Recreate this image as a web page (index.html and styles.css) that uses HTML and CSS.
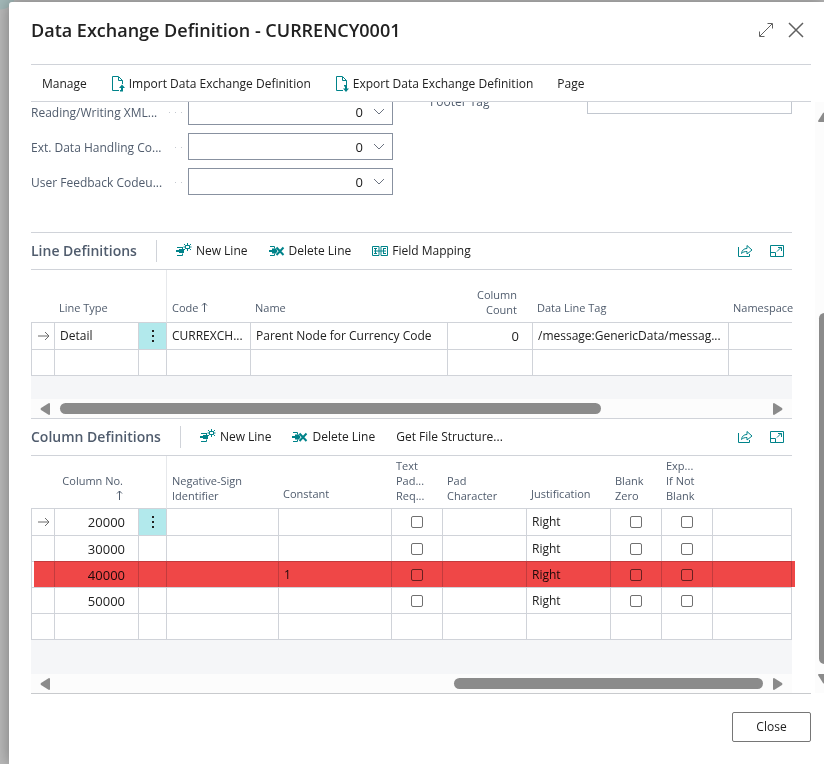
FILE: index.html
```html
<!DOCTYPE html>
<html lang="en">
<head>
  <meta charset="UTF-8">
  <meta name="viewport" content="width=device-width, initial-scale=1.0">
  <title>Data Exchange Definition - CURRENCY0001</title>
  <link rel="stylesheet" href="styles.css">
</head>
<body>
  <!-- Shared icons -->
  <svg class="sprite" aria-hidden="true">
    <symbol id="i-new" viewBox="0 0 16 16">
      <path d="M1 4.500h5M1 12.500h5.500M6.500 12.500v-2M6.500 4v2" fill="none" stroke="currentColor"/>
      <path d="M3 6h5v4H3V9H0V7h3z" fill="currentColor"/>
      <path d="M9.500 2.500h4v3h-4zM8 1l1.500 1.500M15 1l-1.500 1.500M8 7l1.500-1.500M15 7l-1.500-1.500M11.500 0v2M11.500 6v2M7.500 4h2M13.500 4h2" fill="none" stroke="currentColor"/>
    </symbol>
    <symbol id="i-delete" viewBox="0 0 16 16">
      <path d="M1 3.500h4.500v2M1 12.500h4.500v-2" fill="none" stroke="currentColor"/>
      <path d="M3 5.500h4l1.500 2.500L7 10.500H3V9H0V7h3z" fill="currentColor"/>
      <path d="M7.500 4.500l7 7.500M14.500 4.500l-7 7.500" fill="none" stroke="currentColor" stroke-width="2"/>
    </symbol>
    <symbol id="i-map" viewBox="0 0 16 16">
      <path d="M.5 3.500v9h6.500v-9zM9 3.500v9h6.500v-9z" fill="none" stroke="currentColor"/>
      <path d="M2 5.500h3M2 8h3M2 10.500h3M11 5.500h3M11 8h3M11 10.500h3M3.500 5v6M11.500 5v6M5 8h6" fill="none" stroke="currentColor"/>
    </symbol>
    <symbol id="i-share" viewBox="0 0 16 16">
      <path d="M1.500 4v9.500h11V11" fill="none" stroke="currentColor"/>
      <path d="M4.500 10.500c.5-3.500 2.500-5 5.500-5v-3L15 7l-5 4V8.500c-2.500 0-4 .5-5.500 2z" fill="none" stroke="currentColor"/>
    </symbol>
    <symbol id="i-expand" viewBox="0 0 16 16">
      <path d="M1.500 2.500h13v11h-13zM1.500 9.500h5v4M8 8.500l4.500-4.500M9 4.500h3.500V8" fill="none" stroke="currentColor"/>
    </symbol>
    <symbol id="i-row" viewBox="0 0 14 12">
      <path d="M1 6h11M8 2l4 4-4 4" fill="none" stroke="currentColor"/>
    </symbol>
    <symbol id="i-chevron" viewBox="0 0 12 8">
      <path d="M1 1l5 5 5-5" fill="none" stroke="currentColor"/>
    </symbol>
    <symbol id="i-dots" viewBox="0 0 4 14">
      <path d="M1 1h2v2H1zM1 6h2v2H1zM1 11h2v2H1z" fill="currentColor"/>
    </symbol>
    <symbol id="i-left" viewBox="0 0 10 12">
      <path d="M9 0q1 0 1 1v10q0 1-1 1L1 7Q0 6 1 5z" fill="currentColor"/>
    </symbol>
    <symbol id="i-right" viewBox="0 0 10 12">
      <path d="M1 0Q0 0 0 1v10q0 1 1 1l8-5q1-1 0-2z" fill="currentColor"/>
    </symbol>
    <symbol id="i-up" viewBox="0 0 12 10">
      <path d="M0 9q0 1 1 1h10q1 0 1-1L7 1Q6 0 5 1z" fill="currentColor"/>
    </symbol>
    <symbol id="i-down" viewBox="0 0 12 10">
      <path d="M0 1q0-1 1-1h10q1 0 1 1L7 9q-1 1-2 0z" fill="currentColor"/>
    </symbol>
  </svg>

  <main class="dialog">
    <header class="dialog-header">
      <h1>Data Exchange Definition - CURRENCY0001</h1>
      <button class="icon-btn" aria-label="Enlarge">
        <svg width="16" height="16" viewBox="0 0 16 16"><path d="M2 14L14 2M9.500 1.500h5v5M1.500 9.500v5h5" fill="none" stroke="currentColor"/></svg>
      </button>
      <button class="icon-btn" aria-label="Close dialog">
        <svg width="16" height="16" viewBox="0 0 16 16"><path d="M1 1l14 14M15 1L1 15" fill="none" stroke="currentColor" stroke-width="1.500"/></svg>
      </button>
    </header>

    <nav class="action-bar">
      <button>Manage</button>
      <button>
        <svg width="14" height="16" viewBox="0 0 14 16"><path d="M8 14.500H1.500V.5h6l4 4V8M7.500 1v3.500h4" fill="none" stroke="currentColor"/><path d="M11 8.500l3 3.500h-2v3.500H9V14h1v-2H8z" fill="currentColor"/></svg>
        Import Data Exchange Definition
      </button>
      <button>
        <svg width="14" height="16" viewBox="0 0 14 16"><path d="M8 14.500H1.500V.5h6l4 4V9M7.500 1v3.500h4" fill="none" stroke="currentColor"/><path d="M11 16l3-3.500h-2V9H9v1.500h1v2H8z" fill="currentColor"/></svg>
        Export Data Exchange Definition
      </button>
      <button>Page</button>
    </nav>

    <div class="scroll-area">
      <div class="content">
        <div class="fields">
          <div class="field-column scrolled">
            <div class="field">
              <label for="xmlport">Reading/Writing XML...</label>
              <div class="lookup"><input id="xmlport" type="text" value="0"><svg width="12" height="8"><use href="#i-chevron"/></svg></div>
            </div>
            <div class="field">
              <label for="handling">Ext. Data Handling Co...</label>
              <div class="lookup"><input id="handling" type="text" value="0"><svg width="12" height="8"><use href="#i-chevron"/></svg></div>
            </div>
            <div class="field">
              <label for="feedback">User Feedback Codeu...</label>
              <div class="lookup"><input id="feedback" type="text" value="0"><svg width="12" height="8"><use href="#i-chevron"/></svg></div>
            </div>
          </div>
          <div class="field-column">
            <div class="field">
              <label for="footer-tag">Footer Tag</label>
              <div class="lookup readonly"><input id="footer-tag" type="text" readonly></div>
            </div>
          </div>
        </div>

        <section class="part">
          <div class="part-header">
            <h2>Line Definitions</h2>
            <div class="part-actions">
              <button><svg width="16" height="16"><use href="#i-new"/></svg>New Line</button>
              <button><svg width="16" height="16"><use href="#i-delete"/></svg>Delete Line</button>
              <button><svg width="16" height="16"><use href="#i-map"/></svg>Field Mapping</button>
            </div>
            <button class="tool" aria-label="Share"><svg width="16" height="16"><use href="#i-share"/></svg></button>
            <button class="tool" aria-label="Expand"><svg width="16" height="16"><use href="#i-expand"/></svg></button>
          </div>
          <table>
            <colgroup>
              <col class="w-mark"><col class="w-84"><col class="w-menu"><col class="w-84"><col class="w-name"><col class="w-count"><col class="w-tag"><col>
            </colgroup>
            <thead>
              <tr>
                <th></th>
                <th class="single">Line Type</th>
                <th></th>
                <th class="single frozen">Code <svg class="sort" width="7" height="10" viewBox="0 0 7 10"><path d="M3.500 10V1M1 3.500L3.500 1 6 3.500" fill="none" stroke="currentColor"/></svg></th>
                <th class="single">Name</th>
                <th class="num">Column<br>Count</th>
                <th class="single">Data Line Tag</th>
                <th class="single">Namespace</th>
              </tr>
            </thead>
            <tbody>
              <tr class="current">
                <td class="mark"><svg width="14" height="12"><use href="#i-row"/></svg></td>
                <td>Detail</td>
                <td class="menu"><button aria-label="Row options"><svg width="4" height="14"><use href="#i-dots"/></svg></button></td>
                <td>CURREXCH...</td>
                <td>Parent Node for Currency Code</td>
                <td class="num">0</td>
                <td>/message:GenericData/messag...</td>
                <td></td>
              </tr>
              <tr><td></td><td></td><td></td><td></td><td></td><td></td><td></td><td></td></tr>
            </tbody>
          </table>
          <div class="table-end"></div>
          <div class="hscroll">
            <svg width="10" height="12"><use href="#i-left"/></svg>
            <div class="track"><div class="thumb" style="width: 77%"></div></div>
            <svg width="10" height="12"><use href="#i-right"/></svg>
          </div>
        </section>

        <section class="part">
          <div class="part-header">
            <h2>Column Definitions</h2>
            <div class="part-actions">
              <button><svg width="16" height="16"><use href="#i-new"/></svg>New Line</button>
              <button><svg width="16" height="16"><use href="#i-delete"/></svg>Delete Line</button>
              <button>Get File Structure...</button>
            </div>
            <button class="tool" aria-label="Share"><svg width="16" height="16"><use href="#i-share"/></svg></button>
            <button class="tool" aria-label="Expand"><svg width="16" height="16"><use href="#i-expand"/></svg></button>
          </div>
          <table class="closed">
            <colgroup>
              <col class="w-mark"><col class="w-84"><col class="w-menu"><col class="w-sign"><col class="w-constant"><col class="w-check"><col class="w-84"><col class="w-84"><col class="w-check"><col class="w-check"><col>
            </colgroup>
            <thead>
              <tr>
                <th></th>
                <th class="num">Column No.<br><svg class="sort" width="7" height="10" viewBox="0 0 7 10"><path d="M3.500 10V1M1 3.500L3.500 1 6 3.500" fill="none" stroke="currentColor"/></svg></th>
                <th></th>
                <th class="frozen">Negative-Sign<br>Identifier</th>
                <th class="single">Constant</th>
                <th>Text<br>Pad...<br>Req...</th>
                <th>Pad<br>Character</th>
                <th class="single">Justification</th>
                <th>Blank<br>Zero</th>
                <th>Exp...<br>If Not<br>Blank</th>
                <th></th>
              </tr>
            </thead>
            <tbody>
              <tr class="current">
                <td class="mark"><svg width="14" height="12"><use href="#i-row"/></svg></td>
                <td class="num">20000</td>
                <td class="menu"><button aria-label="Row options"><svg width="4" height="14"><use href="#i-dots"/></svg></button></td>
                <td></td><td></td>
                <td class="check"><input type="checkbox" aria-label="Text Padding Required"></td>
                <td></td><td>Right</td>
                <td class="check"><input type="checkbox" aria-label="Blank Zero"></td>
                <td class="check"><input type="checkbox" aria-label="Export If Not Blank"></td>
                <td></td>
              </tr>
              <tr>
                <td></td><td class="num">30000</td><td></td><td></td><td></td>
                <td class="check"><input type="checkbox" aria-label="Text Padding Required"></td>
                <td></td><td>Right</td>
                <td class="check"><input type="checkbox" aria-label="Blank Zero"></td>
                <td class="check"><input type="checkbox" aria-label="Export If Not Blank"></td>
                <td></td>
              </tr>
              <tr class="highlighted">
                <td></td><td class="num">40000</td><td></td><td></td><td>1</td>
                <td class="check"><input type="checkbox" aria-label="Text Padding Required"></td>
                <td></td><td>Right</td>
                <td class="check"><input type="checkbox" aria-label="Blank Zero"></td>
                <td class="check"><input type="checkbox" aria-label="Export If Not Blank"></td>
                <td></td>
              </tr>
              <tr>
                <td></td><td class="num">50000</td><td></td><td></td><td></td>
                <td class="check"><input type="checkbox" aria-label="Text Padding Required"></td>
                <td></td><td>Right</td>
                <td class="check"><input type="checkbox" aria-label="Blank Zero"></td>
                <td class="check"><input type="checkbox" aria-label="Export If Not Blank"></td>
                <td></td>
              </tr>
              <tr><td></td><td></td><td></td><td></td><td></td><td></td><td></td><td></td><td></td><td></td><td></td></tr>
            </tbody>
          </table>
          <div class="table-end tall"></div>
          <div class="hscroll end">
            <svg width="10" height="12"><use href="#i-left"/></svg>
            <div class="track"><div class="thumb" style="width: 44%"></div></div>
            <svg width="10" height="12"><use href="#i-right"/></svg>
          </div>
        </section>
      </div>

      <div class="vscroll">
        <svg width="12" height="10"><use href="#i-up"/></svg>
        <div class="track"><div class="thumb" style="height: 66%"></div></div>
        <svg width="12" height="10"><use href="#i-down"/></svg>
      </div>
    </div>

    <footer class="dialog-footer">
      <button>Close</button>
    </footer>
  </main>
</body>
</html>
```

FILE: styles.css
```css
* { box-sizing: border-box; }

body {
  --line: #d0d3d9;
  --teal: #00838a;
  --muted: #505c6d;
  margin: 0;
  min-height: 100vh;
  padding: 2px 0 0 9px;
  background: radial-gradient(circle at 0 -6px, #a3b9b9 15px, transparent 16px), #b9b9b9;
  font-family: "Segoe UI", "Open Sans", sans-serif;
  font-size: 12px;
  line-height: 18px;
  color: #212121;
  overflow: hidden;
}

.sprite { display: none; }

svg { flex: none; }

button {
  border: 0;
  padding: 0;
  background: none;
  font: inherit;
  color: inherit;
  white-space: nowrap;
  cursor: pointer;
}

.dialog {
  display: flex;
  flex-direction: column;
  min-height: calc(100vh - 2px);
  padding-left: 22px;
  background: #fff;
  border-top-left-radius: 3px;
  box-shadow: 0 0 16px rgba(0, 0, 0, 0.35);
}

.dialog-header {
  display: flex;
  align-items: center;
  gap: 14px;
  height: 63px;
  margin-right: 13px;
  padding: 0 7px 6px 0;
  border-bottom: 1px solid var(--line);
}

.dialog-header h1 {
  flex: 1;
  margin: 0;
  font-size: 18px;
  font-weight: 600;
}

.icon-btn {
  display: flex;
  color: #606060;
}

/* Action bar */
.action-bar {
  display: flex;
  gap: 24px;
  height: 37px;
  margin-right: 13px;
  padding: 2px 11px 0;
  border-bottom: 1px solid var(--line);
}

.action-bar button {
  display: flex;
  align-items: center;
  gap: 4px;
}

.action-bar svg,
.part-actions svg,
.tool { color: var(--teal); }

.scroll-area {
  display: flex;
  gap: 23px;
  overflow: hidden;
}

.content {
  flex: 1;
  min-width: 0;
  margin-top: -15px;
}

/* Fields */
.fields {
  display: grid;
  grid-template-columns: 1fr 1fr;
  gap: 37px;
  height: 145px;
}

.field-column {
  display: flex;
  flex-direction: column;
  gap: 8px;
}

.field-column.scrolled { padding-top: 11px; }

.field {
  display: flex;
  align-items: center;
  height: 27px;
  color: var(--muted);
}

.field label {
  display: flex;
  align-items: center;
  width: 157px;
  padding-top: 2px;
  white-space: nowrap;
}

.field label::after {
  content: "";
  flex: 1;
  height: 1px;
  margin: 0 6px 0 9px;
  background: repeating-linear-gradient(270deg, #c5c9d0 0 1px, transparent 1px 6px);
}

.lookup {
  flex: 1;
  display: flex;
  align-items: center;
  height: 27px;
  padding-right: 7px;
  border: 1px solid #8891a0;
  color: #6b7280;
}

.lookup.readonly { border-color: #c2c7cf; }

.lookup input {
  flex: 1;
  min-width: 0;
  padding: 0 10px 0 0;
  border: 0;
  outline: 0;
  background: none;
  font: inherit;
  font-size: 13px;
  color: #212121;
  text-align: right;
}

/* List parts */
.part { border-top: 1px solid var(--line); }

.part-header {
  display: flex;
  align-items: center;
  gap: 16px;
  height: 37px;
  padding-right: 7px;
  border-bottom: 1px solid var(--line);
}

.part-header h2 {
  margin: 0;
  font-size: 14px;
  font-weight: 600;
  color: var(--muted);
}

.part-actions {
  flex: 1;
  display: flex;
  align-items: center;
  gap: 21px;
  height: 22px;
  margin-left: 3px;
  padding-left: 19px;
  border-left: 1px solid var(--line);
}

.part-actions button {
  display: flex;
  align-items: center;
  gap: 4px;
}

.tool { display: flex; }

table {
  width: 100%;
  table-layout: fixed;
  border-collapse: separate;
  border-spacing: 0;
}

.w-mark { width: 23px; }
.w-menu { width: 28px; }
.w-84 { width: 84px; }
.w-name { width: 197px; }
.w-count { width: 85px; }
.w-tag { width: 196px; }
.w-sign { width: 112px; }
.w-constant { width: 113px; }
.w-check { width: 51px; }

th {
  height: 53px;
  padding: 0 5px 5px;
  border-bottom: 1px solid var(--line);
  font-size: 11px;
  font-weight: 400;
  line-height: 15px;
  color: var(--muted);
  text-align: left;
  vertical-align: bottom;
  white-space: nowrap;
}

th.single { padding-bottom: 7px; }
th.num { padding-right: 15px; }
th.frozen { border-left: 1px solid #e6e8eb; }

td {
  height: 26px;
  padding: 0 5px;
  border-left: 1px solid var(--line);
  border-bottom: 1px solid var(--line);
  white-space: nowrap;
}

.current td { height: 27px; }
.closed td:last-child { border-right: 1px solid var(--line); }

.num { text-align: right; }

td.num {
  padding-right: 13px;
  font-size: 13px;
}

td.mark {
  color: #6b6b6b;
  line-height: 0;
}

td.menu {
  background: #b2e9ec;
  text-align: center;
  line-height: 0;
}

td.check {
  text-align: center;
  line-height: 0;
}

.check input {
  appearance: none;
  width: 12px;
  height: 12px;
  margin: 0;
  border: 1px solid #707070;
  border-radius: 2px;
  background: #fff;
}

/* Marker stroke over the row */
.highlighted { position: relative; }

.highlighted td:last-child::after {
  content: "";
  position: absolute;
  inset: -1px -3px 1px 3px;
  background: #ef4747;
  mix-blend-mode: multiply;
  pointer-events: none;
}

.table-end {
  height: 23px;
  background: #f5f6f8;
}

.table-end.tall { height: 34px; }

/* Scrollbars */
.hscroll {
  display: flex;
  align-items: center;
  gap: 10px;
  height: 19px;
  padding: 0 9px;
  background: #fcfcfc;
  color: #8b8b8b;
}

.track {
  flex: 1;
  display: flex;
}

.hscroll.end .track { justify-content: flex-end; }

.thumb {
  height: 11px;
  border-radius: 6px;
  background: #8b8b8b;
}

.vscroll {
  display: flex;
  flex-direction: column;
  gap: 10px;
  width: 9px;
  padding: 10px 0 9px 3px;
  background: #fcfcfc;
  color: #8b8b8b;
  overflow: hidden;
}

.vscroll .track { align-items: flex-end; }

.vscroll .thumb {
  flex: none;
  width: 11px;
  margin-left: 1px;
}

.dialog-footer {
  display: flex;
  justify-content: flex-end;
  margin-right: 13px;
  padding: 18px 0 22px;
  border-top: 1px solid #c8cacd;
}

.dialog-footer button {
  width: 79px;
  height: 30px;
  border: 1px solid #767676;
  border-radius: 2px;
}
```
